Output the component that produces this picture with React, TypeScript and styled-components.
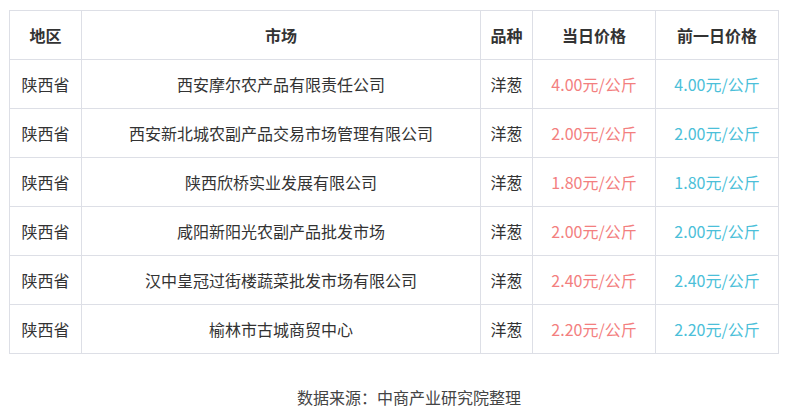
import * as React from 'react';
import styled, { createGlobalStyle } from 'styled-components';

const GlobalStyle = createGlobalStyle`
  html, body {
    margin: 0;
    padding: 0;
    background: #ffffff;
  }
  body {
    font-family: "Noto Sans CJK SC", "Noto Sans", sans-serif;
    color: #333333;
  }
`;

const Page = styled.div`
  width: 785px;
  padding: 10px 0 0 9px;
  box-sizing: border-box;
`;

const Table = styled.table`
  width: 770px;
  border-collapse: collapse;
  table-layout: fixed;
  font-size: 16px;
`;

const Col = styled.col<{ $w?: number }>`
  width: ${(p) => (p.$w ? `${p.$w}px` : 'auto')};
`;

const HeadCell = styled.th`
  height: 48px;
  border: 1px solid #dddfe6;
  font-weight: bold;
  color: #333333;
  text-align: center;
  padding: 0;
`;

const Cell = styled.td<{ $tone?: 'red' | 'blue' }>`
  height: 48px;
  border: 1px solid #dddfe6;
  text-align: center;
  padding: 0;
  color: ${(p) => (p.$tone === 'red' ? '#f37f7f' : p.$tone === 'blue' ? '#4cbfd9' : '#333333')};
`;

const Source = styled.div`
  width: 770px;
  box-sizing: border-box;
  padding-left: 30px;
  margin-top: 31px;
  text-align: center;
  font-size: 16px;
  color: #444444;
`;

const columns = [
  { title: '地区', w: 72 },
  { title: '市场', w: 399 },
  { title: '品种', w: 52 },
  { title: '当日价格', w: 123 },
  { title: '前一日价格' },
];

const rows = [
  { market: '西安摩尔农产品有限责任公司', today: '4.00', prev: '4.00' },
  { market: '西安新北城农副产品交易市场管理有限公司', today: '2.00', prev: '2.00' },
  { market: '陕西欣桥实业发展有限公司', today: '1.80', prev: '1.80' },
  { market: '咸阳新阳光农副产品批发市场', today: '2.00', prev: '2.00' },
  { market: '汉中皇冠过街楼蔬菜批发市场有限公司', today: '2.40', prev: '2.40' },
  { market: '榆林市古城商贸中心', today: '2.20', prev: '2.20' },
];

export default function App() {
  return (
    <Page>
      <GlobalStyle />
      <Table>
        <colgroup>
          {columns.map((c) => (
            <Col key={c.title} $w={c.w} />
          ))}
        </colgroup>
        <thead>
          <tr>
            {columns.map((c) => (
              <HeadCell key={c.title}>{c.title}</HeadCell>
            ))}
          </tr>
        </thead>
        <tbody>
          {rows.map((r) => (
            <tr key={r.market}>
              <Cell>陕西省</Cell>
              <Cell>{r.market}</Cell>
              <Cell>洋葱</Cell>
              <Cell $tone="red">{r.today}元/公斤</Cell>
              <Cell $tone="blue">{r.prev}元/公斤</Cell>
            </tr>
          ))}
        </tbody>
      </Table>
      <Source>数据来源：中商产业研究院整理</Source>
    </Page>
  );
}
